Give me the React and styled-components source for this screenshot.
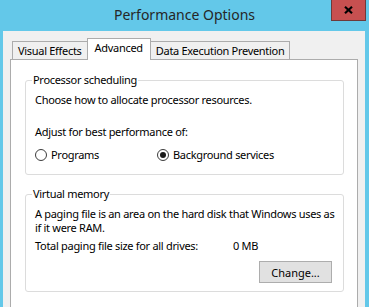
import React from 'react';
import styled, { createGlobalStyle } from 'styled-components';

const GlobalStyle = createGlobalStyle`
  html, body {
    margin: 0;
    padding: 0;
    background: #63c8e9;
  }
  body {
    font-family: 'Segoe UI', 'Noto Sans', sans-serif;
    font-size: 11px;
    letter-spacing: -0.3px;
    color: #000;
  }
`;

const Window = styled.div`
  width: 369px;
  height: 307px;
  background: #63c8e9;
  display: flex;
  flex-direction: column;
  overflow: hidden;
`;

const TitleBar = styled.div`
  height: 31px;
  flex: none;
  display: grid;
  grid-template-columns: 1fr auto 1fr;
  align-items: start;
`;

const Title = styled.div`
  grid-column: 2;
  font-size: 14px;
  letter-spacing: 0;
  line-height: 20px;
  padding-top: 5px;
  color: #262626;
  white-space: nowrap;
`;

const CloseButton = styled.div`
  grid-column: 3;
  justify-self: end;
  width: 33px;
  height: 20px;
  margin-right: 3px;
  background: #c75050;
  border: 1px solid #6e3a3a;
  border-top: none;
  display: flex;
  align-items: center;
  justify-content: center;
`;

const Body = styled.div`
  flex: 1;
  margin: 0 4px 0 3px;
  background: #f0f0f0;
  padding: 7px 7px 0 7px;
  display: flex;
  flex-direction: column;
`;

const TabStrip = styled.div`
  display: flex;
  align-items: flex-end;
  height: 21px;
  padding-left: 2px;
`;

const Tab = styled.div`
  position: relative;
  z-index: ${(p) => (p.$active ? 2 : 1)};
  height: ${(p) => (p.$active ? '22px' : '18px')};
  margin: 0 ${(p) => (p.$active ? '-1px' : '0')} ${(p) => (p.$active ? '-1px' : '0')};
  padding: 0 ${(p) => (p.$active ? '7px' : '5px')};
  box-sizing: border-box;
  border: 1px solid #acacac;
  border-bottom: none;
  background: ${(p) => (p.$active ? '#fff' : '#f0f0f0')};
  line-height: ${(p) => (p.$active ? '18px' : '17px')};
  white-space: nowrap;
`;

const Panel = styled.div`
  flex: 1;
  background: #fff;
  border: 1px solid #acacac;
  border-bottom: none;
  padding: 12px 13px 0 14px;
  display: flex;
  flex-direction: column;
  gap: 11px;
`;

const Group = styled.fieldset`
  margin: 0;
  padding: ${(p) => p.$pad};
  border: 1px solid #dcdcdc;
  border-radius: 3px;
  min-width: 0;
`;

const Legend = styled.legend`
  margin-left: -3px;
  padding: 0 1px;
  line-height: 16px;
`;

const Line = styled.div`
  line-height: ${(p) => p.$lh || '16px'};
  margin-top: ${(p) => p.$top || '0'};
  white-space: nowrap;
`;

const RadioRow = styled.div`
  display: grid;
  grid-template-columns: 122px auto;
  margin-top: 7px;
`;

const RadioOption = styled.label`
  display: flex;
  align-items: center;
  gap: 4px;
  line-height: 16px;
`;

const RadioCircle = styled.span`
  width: 12px;
  height: 12px;
  box-sizing: border-box;
  border-radius: 50%;
  border: 1px solid #3c3c3c;
  background: #fff;
  display: flex;
  align-items: center;
  justify-content: center;

  &::after {
    content: '';
    width: 6px;
    height: 6px;
    border-radius: 50%;
    background: #1a1a1a;
    display: ${(p) => (p.$checked ? 'block' : 'none')};
  }
`;

const SizeRow = styled.div`
  display: grid;
  grid-template-columns: 198px auto;
  line-height: 14px;
  margin-top: 4px;
`;

const ButtonRow = styled.div`
  display: flex;
  justify-content: flex-end;
  padding-right: 1px;
  margin-top: 8px;
`;

const Button = styled.button`
  width: 73px;
  height: 22px;
  background: #e1e1e1;
  border: 1px solid #adadad;
  font: inherit;
  color: #000;
  padding: 0;
`;

function CloseIcon() {
  return (
    <svg width="9" height="8" viewBox="0 0 9 8">
      <path d="M1 0.8 L8 7.2 M8 0.8 L1 7.2" stroke="#000" strokeWidth="2.2" />
    </svg>
  );
}

function Radio({ checked, children }) {
  return (
    <RadioOption>
      <RadioCircle $checked={checked} />
      {children}
    </RadioOption>
  );
}

export default function App() {
  return (
    <>
      <GlobalStyle />
      <Window>
        <TitleBar>
          <Title>Performance Options</Title>
          <CloseButton>
            <CloseIcon />
          </CloseButton>
        </TitleBar>
        <Body>
          <TabStrip>
            <Tab>Visual Effects</Tab>
            <Tab $active>Advanced</Tab>
            <Tab>Data Execution Prevention</Tab>
          </TabStrip>
          <Panel>
            <Group $pad="4px 10px 11px 9px">
              <Legend>Processor scheduling</Legend>
              <Line>Choose how to allocate processor resources.</Line>
              <Line $top="16px">Adjust for best performance of:</Line>
              <RadioRow>
                <Radio>Programs</Radio>
                <Radio checked>Background services</Radio>
              </RadioRow>
            </Group>
            <Group $pad="5px 10px 8px 9px">
              <Legend>Virtual memory</Legend>
              <Line $lh="14px">A paging file is an area on the hard disk that Windows uses as</Line>
              <Line $lh="14px">if it were RAM.</Line>
              <SizeRow>
                <span>Total paging file size for all drives:</span>
                <span>0 MB</span>
              </SizeRow>
              <ButtonRow>
                <Button>Change...</Button>
              </ButtonRow>
            </Group>
          </Panel>
        </Body>
      </Window>
    </>
  );
}
